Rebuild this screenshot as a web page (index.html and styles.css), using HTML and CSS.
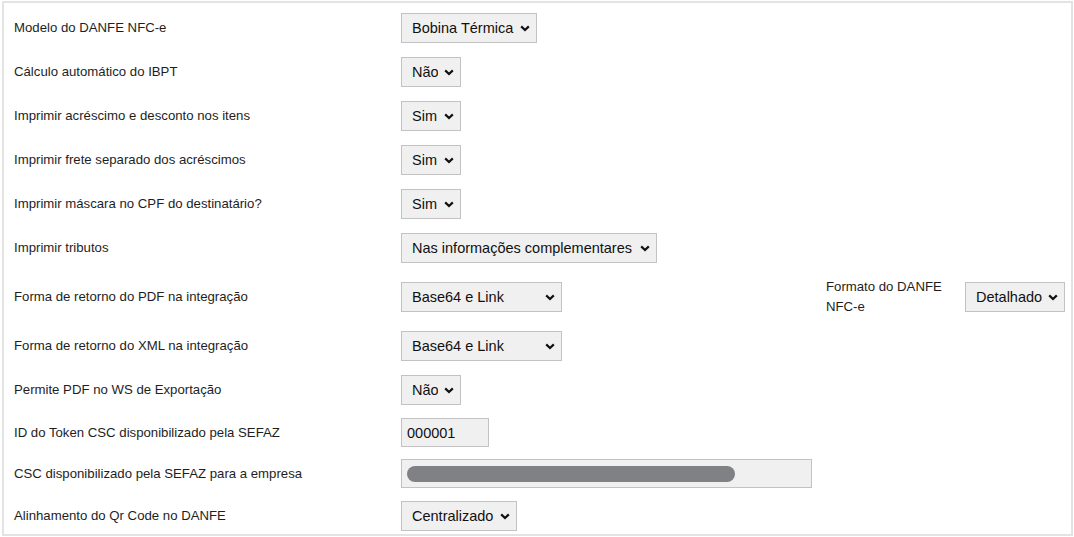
FILE: index.html
```html
<!DOCTYPE html>
<html lang="pt-BR">
<head>
<meta charset="utf-8">
<title>Configurações NFC-e</title>
<link rel="stylesheet" href="styles.css">
</head>
<body>
<div class="frame">
  <div class="row">
    <div class="label">Modelo do DANFE NFC-e</div>
    <div class="ctrl"><select class="sel w136"><option>Bobina Térmica</option><option>A4</option></select></div>
  </div>
  <div class="row">
    <div class="label">Cálculo automático do IBPT</div>
    <div class="ctrl"><select class="sel w60"><option>Não</option><option>Sim</option></select></div>
  </div>
  <div class="row">
    <div class="label">Imprimir acréscimo e desconto nos itens</div>
    <div class="ctrl"><select class="sel w60"><option>Sim</option><option>Não</option></select></div>
  </div>
  <div class="row">
    <div class="label">Imprimir frete separado dos acréscimos</div>
    <div class="ctrl"><select class="sel w60"><option>Sim</option><option>Não</option></select></div>
  </div>
  <div class="row">
    <div class="label">Imprimir máscara no CPF do destinatário?</div>
    <div class="ctrl"><select class="sel w60"><option>Sim</option><option>Não</option></select></div>
  </div>
  <div class="row">
    <div class="label">Imprimir tributos</div>
    <div class="ctrl"><select class="sel w256"><option>Nas informações complementares</option></select></div>
  </div>
  <div class="row">
    <div class="label">Forma de retorno do PDF na integração</div>
    <div class="ctrl"><select class="sel w161"><option>Base64 e Link</option></select></div>
    <div class="label label2">Formato do DANFE NFC-e</div>
    <div class="ctrl"><select class="sel w100"><option>Detalhado</option></select></div>
  </div>
  <div class="row">
    <div class="label">Forma de retorno do XML na integração</div>
    <div class="ctrl"><select class="sel w161"><option>Base64 e Link</option></select></div>
  </div>
  <div class="row">
    <div class="label">Permite PDF no WS de Exportação</div>
    <div class="ctrl"><select class="sel w60"><option>Não</option><option>Sim</option></select></div>
  </div>
  <div class="row row-input">
    <div class="label">ID do Token CSC disponibilizado pela SEFAZ</div>
    <div class="ctrl"><input class="inp w88" type="text" value="000001"></div>
  </div>
  <div class="row row-input">
    <div class="label">CSC disponibilizado pela SEFAZ para a empresa</div>
    <div class="ctrl"><div class="inp w411 masked"><span class="mask"></span></div></div>
  </div>
  <div class="row">
    <div class="label">Alinhamento do Qr Code no DANFE</div>
    <div class="ctrl"><select class="sel w116"><option>Centralizado</option></select></div>
  </div>
</div>
</body>
</html>
```
FILE: styles.css
```css
html, body {
  margin: 0;
  padding: 0;
  background: #ffffff;
}
body {
  font-family: "Liberation Sans", Arial, sans-serif;
  color: #222222;
}
.frame {
  box-sizing: border-box;
  margin: 1px 1px 0 2px;
  height: 535px;
  border: 2px solid #e3e3e3;
  padding: 3px 0 0 10px;
  overflow: hidden;
}
.row {
  display: grid;
  grid-template-columns: 387px 425px 139px auto;
  align-items: center;
  padding: 7px 0;
}
.row-input {
  padding: 6px 0;
}
.label {
  font-size: 13.2px;
  line-height: 20px;
  color: #1e1e1e;
}
.label2 {
  padding-right: 20px;
}
.ctrl {
  display: flex;
  align-items: center;
}
.sel {
  -webkit-appearance: none;
  appearance: none;
  box-sizing: border-box;
  height: 30px;
  margin: 0;
  border: 1px solid #c2c2c2;
  border-radius: 0;
  background-color: #f0f0f0;
  background-image: url("data:image/svg+xml;utf8,<svg xmlns='http://www.w3.org/2000/svg' width='10' height='7' viewBox='0 0 10 7'><path d='M1.2 1.4 L5 5 L8.8 1.4' fill='none' stroke='%23111' stroke-width='2.2'/></svg>");
  background-repeat: no-repeat;
  background-position: right 6px center;
  padding: 0 22px 0 10px;
  font-family: "Liberation Sans", Arial, sans-serif;
  font-size: 14.5px;
  color: #111111;
  outline: none;
}
.inp {
  box-sizing: border-box;
  height: 29px;
  margin: 0;
  border: 1px solid #c2c2c2;
  border-radius: 0;
  background: #f0f0f0;
  padding: 0 5px;
  font-family: "Liberation Sans", Arial, sans-serif;
  font-size: 14.5px;
  color: #111111;
  outline: none;
}
.masked {
  display: flex;
  align-items: center;
}
.mask {
  display: block;
  width: 328px;
  height: 16px;
  border-radius: 8px;
  background: #808184;
}
.w60 { width: 60px; }
.w88 { width: 88px; }
.w100 { width: 100px; }
.w116 { width: 116px; }
.w136 { width: 136px; }
.w161 { width: 161px; }
.w256 { width: 256px; }
.w411 { width: 411px; }
```
